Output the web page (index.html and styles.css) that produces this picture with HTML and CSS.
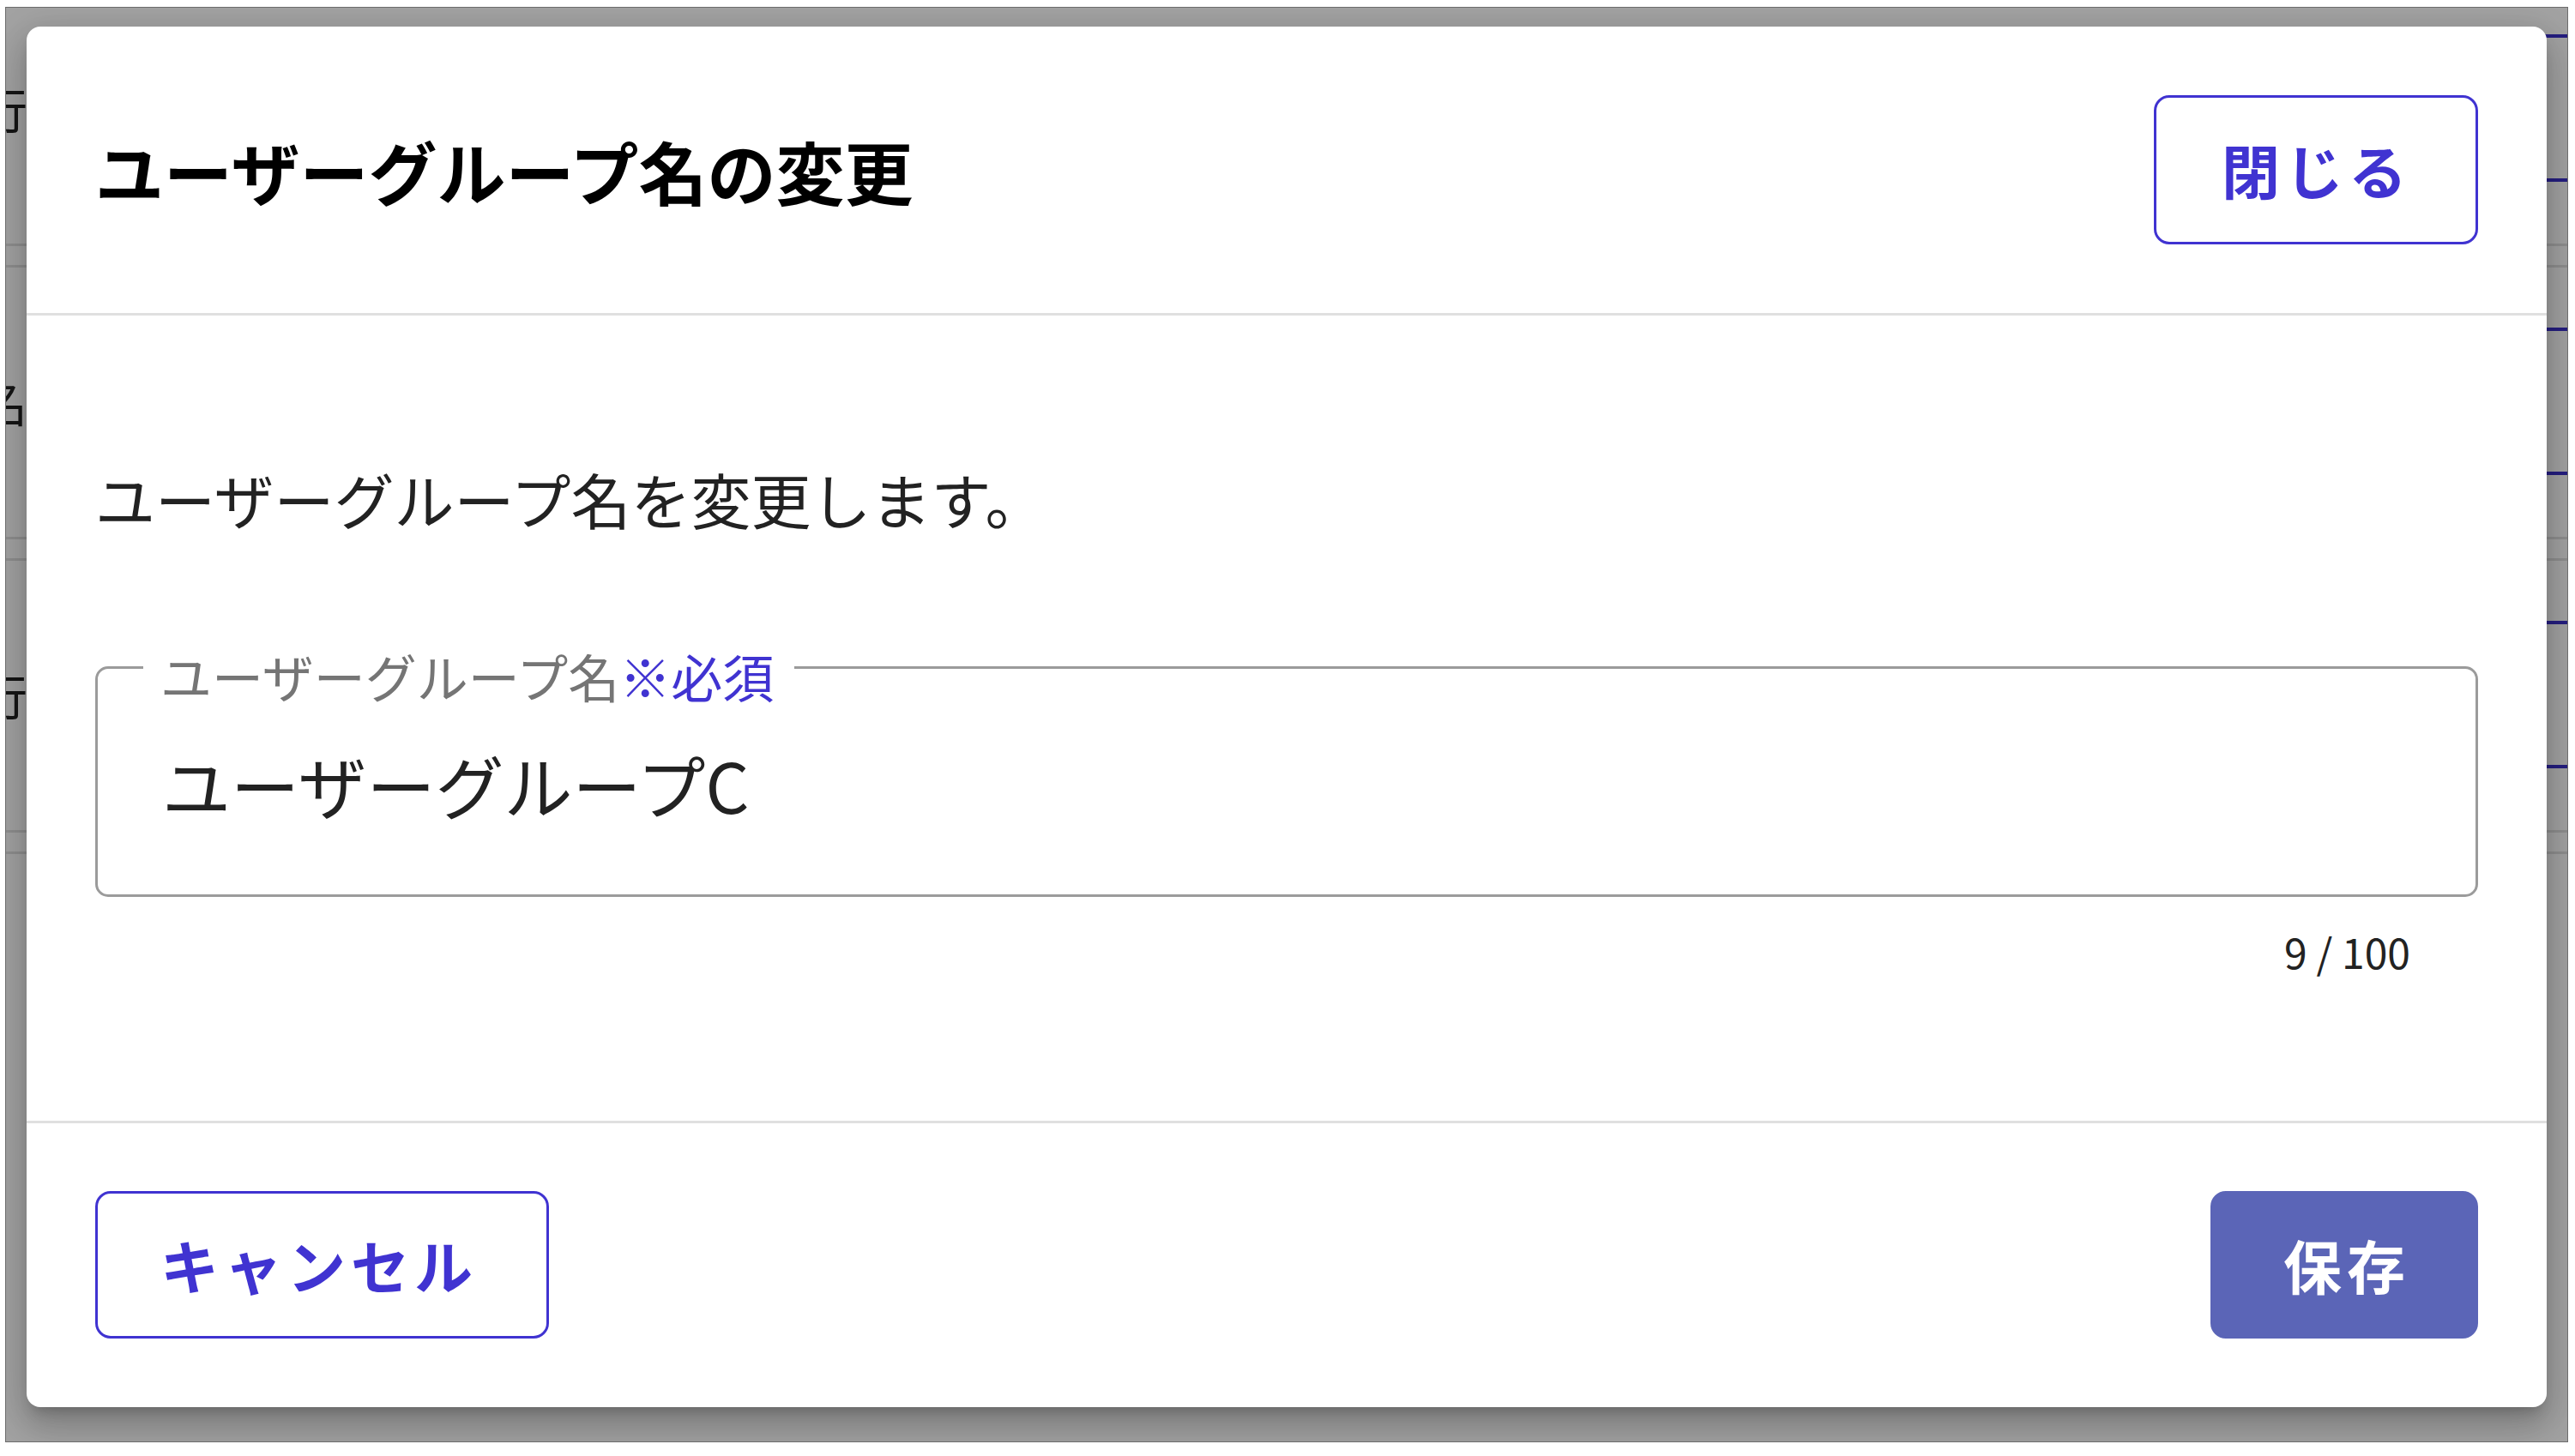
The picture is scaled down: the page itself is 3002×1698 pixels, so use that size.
FILE: index.html
```html
<!DOCTYPE html>
<html lang="ja">
<head>
<meta charset="utf-8">
<title>ユーザーグループ名の変更</title>
<link rel="stylesheet" href="styles.css">
</head>
<body>
<div class="frame">
  <div class="page">
    <div class="bg-group">
      <div class="bg-item"><span class="bg-label">行</span><span class="bg-btn"></span></div>
      <div class="bg-line first"></div>
      <div class="bg-line"></div>
    </div>
    <div class="bg-group">
      <div class="bg-item"><span class="bg-label">名</span><span class="bg-btn"></span></div>
      <div class="bg-line first"></div>
      <div class="bg-line"></div>
    </div>
    <div class="bg-group">
      <div class="bg-item"><span class="bg-label">行</span><span class="bg-btn"></span></div>
      <div class="bg-line first"></div>
      <div class="bg-line"></div>
    </div>
  </div>

  <div class="overlay">
    <div class="modal" role="dialog" aria-labelledby="dlg-title">
      <div class="modal-header">
        <h2 class="modal-title" id="dlg-title">ユーザーグループ名の変更</h2>
        <button class="btn btn-outline btn-close" type="button">閉じる</button>
      </div>
      <div class="modal-body">
        <p class="modal-desc">ユーザーグループ名を変更します。</p>
        <fieldset class="field">
          <legend class="field-legend">ユーザーグループ名<span class="required">※必須</span></legend>
          <div class="field-value">ユーザーグループC</div>
        </fieldset>
        <div class="counter">9 / 100</div>
      </div>
      <div class="modal-footer">
        <button class="btn btn-outline btn-cancel" type="button">キャンセル</button>
        <button class="btn btn-primary btn-save" type="button">保存</button>
      </div>
    </div>
  </div>
</div>
</body>
</html>
```

FILE: styles.css
```css
* {
  box-sizing: border-box;
}

html, body {
  margin: 0;
  padding: 0;
  background: #ffffff;
}

body {
  font-family: "Noto Sans CJK JP", "Noto Sans", sans-serif;
  color: #222222;
}

.frame {
  position: relative;
  margin: 8px 8px 16px 6px;
  height: 1674px;
  border: 1px solid #6c6c6c;
  overflow: hidden;
  background: #ffffff;
}

/* underlying page (seen only at edges, under the backdrop) */
.page {
  margin-top: -39px;
}

.bg-group {
  padding-top: 70px;
}

.bg-item {
  display: flex;
  align-items: center;
  height: 172px;
}

.bg-label {
  margin-left: -31px;
  font-size: 56px;
  line-height: 1;
  color: #222222;
}

.bg-btn {
  margin-left: auto;
  margin-right: -200px;
  width: 300px;
  height: 172px;
  border: 4px solid #3a2fc8;
  border-radius: 18px;
}

.bg-line {
  margin-top: 22px;
  border-top: 3px solid #e0e0e0;
}

.bg-line.first {
  margin-top: 72px;
}

/* backdrop + dialog */
.overlay {
  position: absolute;
  inset: 0;
  display: flex;
  align-items: flex-start;
  justify-content: center;
  padding: 22px 24px;
  background: rgba(0, 0, 0, 0.36);
}

.modal {
  flex: 1;
  background: #ffffff;
  border-radius: 16px;
  box-shadow:
    0 11px 15px -7px rgba(0, 0, 0, 0.2),
    0 24px 38px 3px rgba(0, 0, 0, 0.14),
    0 9px 46px 8px rgba(0, 0, 0, 0.12);
}

.modal-header {
  display: flex;
  align-items: center;
  justify-content: space-between;
  padding: 80px;
  border-bottom: 3px solid #e0e0e0;
}

.modal-title {
  margin: 0;
  font-size: 80px;
  line-height: 1.2;
  font-weight: 700;
  color: #000000;
}

.btn {
  display: inline-flex;
  align-items: center;
  justify-content: center;
  height: 172px;
  border-radius: 18px;
  border: 3px solid #4033d1;
  font-family: "Noto Sans CJK JP", "Noto Sans", sans-serif;
  font-size: 68px;
  font-weight: 700;
  letter-spacing: 6px;
  line-height: 1;
  cursor: pointer;
}

.btn-outline {
  background: #ffffff;
  color: #4033d1;
}

.btn-close {
  height: 174px;
  padding: 0 74px 0 76px;
}

.btn-cancel {
  padding: 0 80px 0 73px;
}

.btn-primary {
  background: #5b65b7;
  border-color: #5b65b7;
  color: #ffffff;
}

.btn-save {
  padding: 0 76px 0 82px;
}

.modal-body {
  padding: 161px 80px 162px;
}

.modal-desc {
  margin: 0 0 104px;
  font-size: 70px;
  line-height: 1.5;
  color: #222222;
}

.field {
  margin: 0;
  padding: 0;
  min-width: 0;
  border: 3px solid #9b9b9b;
  border-radius: 15px;
}

.field-legend {
  margin-left: 53px;
  padding: 20px 24px 0 20px;
  font-size: 60px;
  line-height: 1;
  color: #757575;
}

.required {
  color: #4033d1;
}

.field-value {
  padding: 36px 80px 69px 75px;
  font-size: 80px;
  line-height: 1.5;
  color: #222222;
}

.counter {
  margin-top: 27px;
  padding-right: 79px;
  text-align: right;
  font-size: 48px;
  line-height: 1.5;
  color: #222222;
}

.modal-footer {
  display: flex;
  align-items: center;
  justify-content: space-between;
  padding: 79px 80px 80px;
  border-top: 3px solid #e0e0e0;
}
```
